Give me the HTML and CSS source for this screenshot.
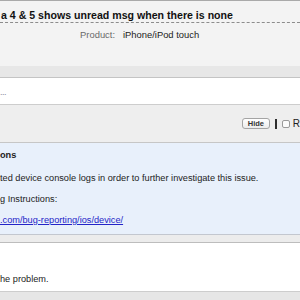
FILE: index.html
```html
<!DOCTYPE html>
<html>
<head>
<meta charset="utf-8">
<link rel="stylesheet" href="styles.css">
</head>
<body>
<div class="page">
  <header class="summary">
    <div class="summary-main">
      <h1 class="title">a 4 &amp; 5 shows unread msg when there is none</h1>
      <div class="meta">
        <span class="label">Product:</span>
        <span class="value">iPhone/iPod touch</span>
      </div>
    </div>
    <div class="summary-foot"></div>
  </header>
  <div class="crumbs">...</div>
  <div class="toolbar">
    <button class="hide-btn" type="button">Hide</button>
    <span class="sep"></span>
    <label class="check"><span class="box"></span><span class="check-text">R</span></label>
  </div>
  <section class="note">
    <h2 class="note-head">ons</h2>
    <p class="note-line">ted device console logs in order to further investigate this issue.</p>
    <p class="note-line">g Instructions:</p>
    <p class="note-line"><a class="note-link" href="#">.com/bug-reporting/ios/device/</a></p>
  </section>
  <div class="spacer"></div>
  <section class="desc">
    <p class="desc-line">he problem.</p>
  </section>
  <div class="tail"></div>
</div>
</body>
</html>
```

FILE: styles.css
```css
html, body {
  margin: 0;
  padding: 0;
  overflow: hidden;
  background: #ffffff;
}

.page {
  width: 300px;
  overflow: hidden;
  font-family: "Liberation Sans", Arial, sans-serif;
  color: #222222;
}

.summary {
  border-top: 1px solid #a9a9a9;
  border-bottom: 1px solid #c4c4c4;
}

.summary-main {
  background: #f3f3f3;
  height: 57px;
  padding-top: 8px;
}

.title {
  margin: 0;
  font-size: 10.6px;
  font-weight: bold;
  line-height: 13px;
  color: #111111;
  padding-left: 1px;
  border-bottom: 1px dashed #8c8c8c;
  white-space: nowrap;
}

.meta {
  display: flex;
  gap: 8px;
  margin-top: 6px;
  font-size: 9.4px;
  line-height: 12px;
}

.label {
  width: 115px;
  text-align: right;
  color: #6a6a6a;
}

.value {
  color: #222222;
}

.summary-foot {
  height: 11px;
  background: #e7e7e7;
}

.crumbs {
  height: 27px;
  border-bottom: 1px solid #cdcdcd;
  font-size: 9px;
  line-height: 12px;
  color: #8a8a9a;
  padding-top: 8px;
  box-sizing: border-box;
  letter-spacing: -0.5px;
}

.toolbar {
  height: 37px;
  background: #eeeeee;
  border-bottom: 1px solid #c6c6c6;
  display: flex;
  align-items: center;
  padding-left: 242px;
  white-space: nowrap;
}

.hide-btn {
  width: 28px;
  height: 11px;
  padding: 0;
  margin: 0;
  border: 1px solid #a4a4a4;
  border-radius: 3px;
  background: linear-gradient(#ffffff, #ececec);
  font-family: "Liberation Sans", Arial, sans-serif;
  font-size: 7.5px;
  font-weight: bold;
  line-height: 9px;
  color: #333333;
}

.sep {
  width: 2px;
  height: 10px;
  background: #2e2e2e;
  margin-left: 5px;
}

.check {
  display: flex;
  align-items: center;
  margin-left: 5px;
  font-size: 10px;
  color: #222222;
}

.box {
  width: 6px;
  height: 6px;
  border: 1px solid #9a9a9a;
  border-radius: 2px;
  background: #fbfbfb;
  margin-right: 3px;
}

.note {
  background: #e8f0fb;
  border-bottom: 1px solid #c3c7cf;
  padding: 6px 0 8px 0;
  font-size: 9.2px;
  line-height: 12px;
}

.note-head {
  margin: 0 0 11px 0;
  font-size: 9.2px;
  font-weight: bold;
  line-height: 12px;
}

.note-line {
  margin: 0 0 9px 0;
  white-space: nowrap;
}

.note-line:last-child {
  margin-bottom: 0;
}

.note-link {
  color: #2424c8;
  text-decoration: underline;
}

.spacer {
  height: 7px;
  background: #ececec;
  border-bottom: 1px solid #bdbdbd;
}

.desc {
  height: 49px;
  box-sizing: border-box;
  padding-top: 30px;
  border-bottom: 1px solid #cdcdcd;
  font-size: 9.2px;
  line-height: 12px;
}

.desc-line {
  margin: 0;
}

.tail {
  height: 20px;
  background: #e6e6e6;
}
```
